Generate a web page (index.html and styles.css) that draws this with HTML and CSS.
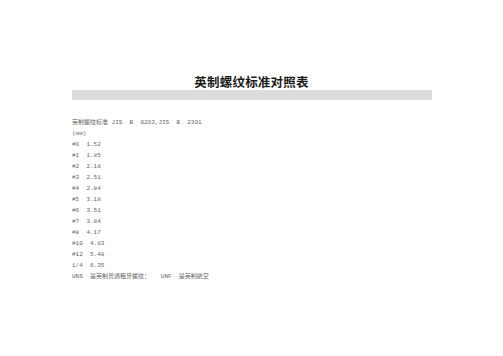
FILE: index.html
```html
<!DOCTYPE html>
<html lang="zh">
<head>
<meta charset="utf-8">
<link rel="stylesheet" href="styles.css">
</head>
<body>
<div class="page">
  <h1 class="title">英制螺纹标准对照表</h1>
  <div class="bar"></div>
  <div class="content">
    <p class="line">英制螺纹标准 JIS  B  0203,JIS  B  2301</p>
    <p class="line">(mm)</p>
    <p class="line">#0  1.52</p>
    <p class="line">#1  1.85</p>
    <p class="line">#2  2.18</p>
    <p class="line">#3  2.51</p>
    <p class="line">#4  2.84</p>
    <p class="line">#5  3.18</p>
    <p class="line">#6  3.51</p>
    <p class="line">#7  3.84</p>
    <p class="line">#8  4.17</p>
    <p class="line">#10  4.83</p>
    <p class="line">#12  5.48</p>
    <p class="line">1/4  6.35</p>
    <p class="line">UNS  是英制普通粗牙螺纹：   UNF  是英制航空</p>
  </div>
</div>
</body>
</html>
```

FILE: styles.css
```css
html, body {
  margin: 0;
  padding: 0;
  background: #ffffff;
}
.page {
  width: 503px;
  height: 356px;
  padding-top: 73px;
  box-sizing: border-box;
}
.title {
  margin: 0;
  text-align: center;
  font-family: "Noto Sans CJK SC", sans-serif;
  font-weight: 700;
  font-size: 12.5px;
  line-height: 17px;
  color: #1a1a1a;
  letter-spacing: 0.2px;
}
.bar {
  margin: 0 0 0 72px;
  width: 360px;
  height: 10px;
  background: #dcdcdc;
}
.content {
  padding: 17px 0 0 72px;
  font-family: "Liberation Mono", "Noto Sans CJK SC", monospace;
  font-size: 6px;
  line-height: 11px;
  color: #666666;
}
.line {
  margin: 0;
  white-space: pre;
}
```
